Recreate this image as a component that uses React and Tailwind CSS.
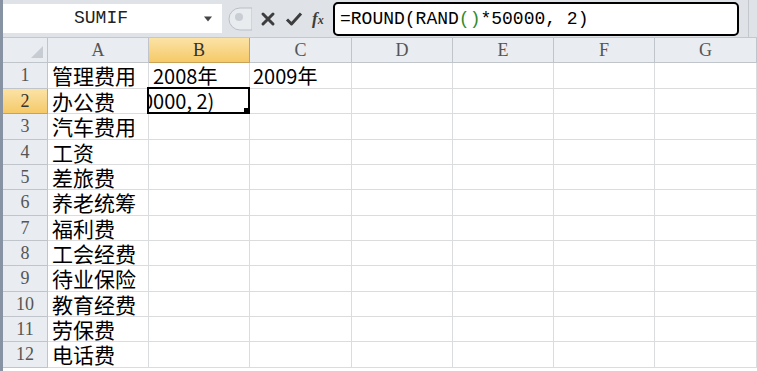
const cols = ["A", "B", "C", "D", "E", "F", "G"];
const colW = [101, 101, 102, 101, 101, 101, 102];
const rowH = [26, 25, 26, 25, 25, 26, 25, 25, 26, 25, 25, 26];
const items = ["管理费用", "办公费", "汽车费用", "工资", "差旅费", "养老统筹", "福利费", "工会经费", "待业保险", "教育经费", "劳保费", "电话费"];

const mono = { fontFamily: '"Liberation Mono", "DejaVu Sans Mono", monospace' };
const serif = { fontFamily: '"Liberation Serif", "DejaVu Serif", serif' };
const cjk = { fontFamily: '"Noto Sans CJK SC", "Noto Sans", sans-serif' };

function FormulaBar() {
  return (
    <div className="flex h-[38px] items-stretch bg-[#dfe3e8] border-b border-[#c3c8cf]">
      <div className="mt-[4px] mb-[4px] flex w-[219px] items-center bg-white">
        <span className="w-[196px] text-center text-[18px] text-[#222]" style={mono}>SUMIF</span>
        <svg width="10" height="6" viewBox="0 0 10 6" className="ml-[4px]">
          <path d="M1 0.5 L9 0.5 L5 5.5 Z" fill="#444" />
        </svg>
      </div>
      <div className="flex w-[111px] items-center">
        <svg width="26" height="26" viewBox="0 0 26 26" className="ml-[4px]">
          <path d="M14 2 A11 11 0 0 0 14 24 L26 24 L26 2 Z" fill="#e9ecef" stroke="#b9bfc7" />
          <circle cx="13" cy="11" r="4" fill="#c9ced4" />
        </svg>
        <svg width="16" height="16" viewBox="0 0 16 16" className="ml-[8px]">
          <path d="M3 3 L13 13 M13 3 L3 13" stroke="#3d3d3d" strokeWidth="3" strokeLinecap="round" />
        </svg>
        <svg width="18" height="16" viewBox="0 0 18 16" className="ml-[9px]">
          <path d="M2 8.5 L6.5 13 L16 2.5" stroke="#3d3d3d" strokeWidth="3" fill="none" strokeLinejoin="round" />
        </svg>
        <span className="ml-[9px] italic font-bold text-[17px] leading-none text-[#3d3d3d]" style={serif}>
          f<span className="text-[12px]">x</span>
        </span>
      </div>
      <div className="mt-[2px] mb-[1px] flex w-[406px] items-center rounded-[5px] border-2 border-black bg-white pl-[5px] text-[18px] text-black" style={mono}>
        =ROUND(RAND<span className="text-[#2e8b2e]">()</span>*50000, 2)
      </div>
      <div className="flex-1 border-r border-[#c3c8cf] mr-[8px]" />
    </div>
  );
}

function ColHeader() {
  return (
    <div className="flex h-[25px]">
      <div className="relative w-[45px] border-r border-b border-[#c0c5cc] bg-[#e9ecf0]">
        <svg width="12" height="12" viewBox="0 0 12 12" className="absolute right-[4px] bottom-[4px]">
          <path d="M12 0 L12 12 L0 12 Z" fill="#c7ccd3" />
        </svg>
      </div>
      {cols.map((c, i) => (
        <div
          key={c}
          style={{ width: colW[i], ...serif }}
          className={
            "flex shrink-0 items-center justify-center border-r border-b text-[18px] " +
            (c === "B"
              ? "border-[#c9a25a] bg-gradient-to-b from-[#fbe3a6] to-[#f5c966] text-[#333]"
              : "border-[#c0c5cc] bg-[#e9ecf0] text-[#555]")
          }
        >
          {c}
        </div>
      ))}
    </div>
  );
}

function Row({ n, h, label }) {
  const sel = n === 2;
  return (
    <div className="flex" style={{ height: h }}>
      <div
        style={serif}
        className={
          "flex w-[45px] shrink-0 items-center justify-center border-r border-b text-[18px] " +
          (sel
            ? "border-[#c9a25a] bg-gradient-to-b from-[#fbe3a6] to-[#f5c966] text-[#333]"
            : "border-[#c0c5cc] bg-[#e9ecf0] text-[#555]")
        }
      >
        {n}
      </div>
      {cols.map((c, i) => (
        <div
          key={c}
          style={{ width: colW[i], ...cjk }}
          className="relative flex shrink-0 items-center overflow-visible border-r border-b border-[#dadcdd] text-[21px] leading-none text-black"
        >
          {c === "A" && <span className="pl-[4px] whitespace-nowrap">{label}</span>}
          {c === "B" && n === 1 && <span className="pl-[4px] text-[20px] whitespace-nowrap">2008年</span>}
          {c === "C" && n === 1 && <span className="pl-[3px] text-[20px] whitespace-nowrap">2009年</span>}
          {c === "B" && sel && (
            <div className="absolute left-[-2px] top-[-2px] z-10 flex h-[calc(100%+3px)] w-[calc(100%+3px)] items-center overflow-hidden border-2 border-black bg-white">
              <span className="ml-[-7px] text-[20px] whitespace-nowrap">0000,  2)</span>
              <div className="absolute right-[-2px] bottom-[-2px] h-[6px] w-[6px] bg-black" />
            </div>
          )}
        </div>
      ))}
    </div>
  );
}

export default function App() {
  return (
    <div className="flex h-[371px] w-[757px] overflow-hidden bg-white">
      <div className="w-[3px] shrink-0 bg-[#8793a2]" />
      <div className="flex min-w-0 flex-1 flex-col">
        <FormulaBar />
        <ColHeader />
        {rowH.map((h, i) => (
          <Row key={i} n={i + 1} h={h} label={items[i]} />
        ))}
      </div>
    </div>
  );
}
